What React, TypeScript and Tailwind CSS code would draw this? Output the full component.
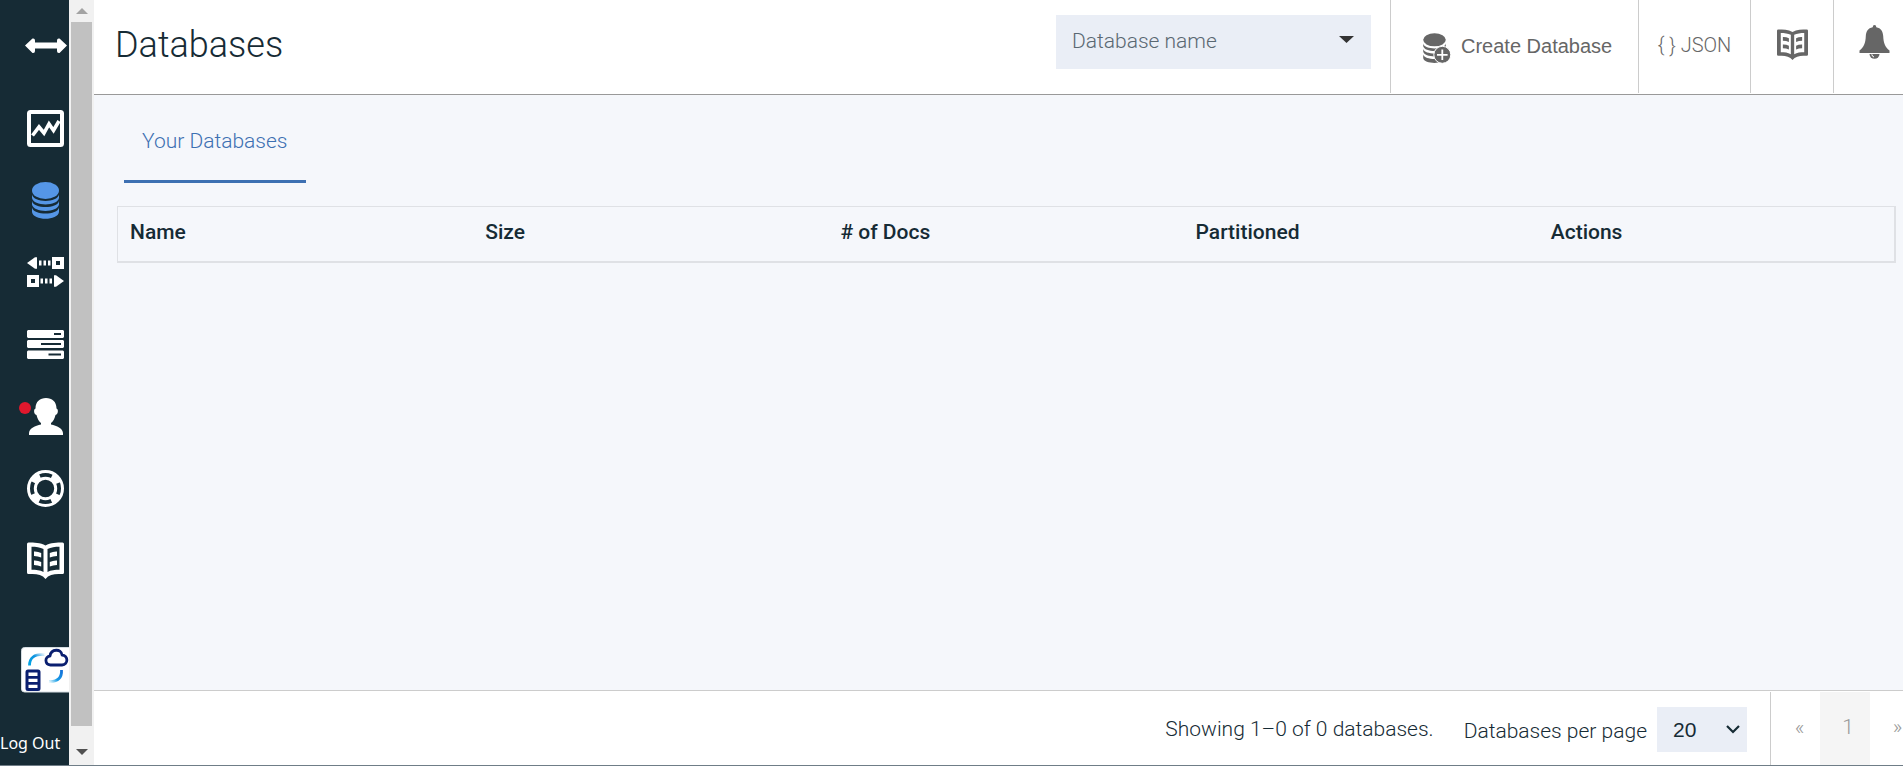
import React from 'react';

type IconProps = { className?: string };

const ArrowsIcon = ({ className }: IconProps) => (
  <svg className={className} viewBox="0 0 42 16" fill="currentColor" aria-hidden="true">
    <path d="M0 7.5 7.5 0.5Q10 0 10 2.5V4.5H32V2.5Q32 0 34.5 0.5L42 7.5 34.5 15Q32 15.5 32 13V10.5H10V13Q10 15.5 7.5 15Z" />
  </svg>
);

const ChartIcon = ({ className }: IconProps) => (
  <svg className={className} viewBox="0 0 37 37" aria-hidden="true">
    <rect x="2" y="2" width="33" height="33" rx="1.5" fill="none" stroke="currentColor" strokeWidth="4" />
    <path d="M5.5 25.5 12 17l5 6 5-9 4.500 6.500L32 11" fill="none" stroke="currentColor" strokeWidth="3.600" />
  </svg>
);

const DatabaseIcon = ({ className }: IconProps) => (
  <svg className={className} viewBox="0 0 27 37" fill="currentColor" aria-hidden="true">
    <ellipse cx="13.500" cy="8.500" rx="13.500" ry="8.500" />
    <path d="M0 12.500C1.500 21 25.500 21 27 12.500V16C25.500 24.500 1.500 24.500 0 16Z" />
    <path d="M0 19C1.500 27 25.500 27 27 19V22.500C25.500 31 1.500 31 0 22.500Z" />
    <path d="M0 25.500C1.500 33.500 25.500 33.500 27 25.500V30C26 39 1 39 0 30Z" />
  </svg>
);

const ReplicationIcon = ({ className }: IconProps) => (
  <svg className={className} viewBox="0 0 37 30" fill="currentColor" aria-hidden="true">
    <path d="M0 6 8 0.300H10V11.700H8ZM37 24 29 18.300H27V29.700H29Z" />
    <path d="M12 3.500h2.500v5H12zM16.500 3.500H19v5h-2.500zM21 3.500h2.500v5H21zM13.500 21.500H16v5h-2.500zM18 21.500h2.500v5H18zM22.500 21.500H25v5h-2.500z" />
    <path fillRule="evenodd" d="M25 0h12v12H25zM29 4v4h4V4zM0 18h12v12H0zM4 22v4h4v-4z" />
  </svg>
);

const ServersIcon = ({ className }: IconProps) => (
  <svg className={className} viewBox="0 0 37 29" fill="currentColor" aria-hidden="true">
    <path
      fillRule="evenodd"
      d="M1 0H36L37 1V7L36 8H1L0 7V1ZM27 3V5H34V3ZM1 10H36L37 11V17L36 18H1L0 17V11ZM14 13V15H34V13ZM1 20.500H36L37 21.500V28L36 29H1L0 28V21.500ZM21.500 23.500V25.500H34V23.500Z"
    />
  </svg>
);

const PersonIcon = ({ className }: IconProps) => (
  <svg className={className} viewBox="0 0 34 37" fill="currentColor" aria-hidden="true">
    <path d="M17 0C23 0 27.500 3.500 27.500 10.500 29.500 11 29.500 16 26.500 17 25.500 21 24 23.500 22 25V26.500C28 28 33.500 30 34 35V37H0V35C0.500 30 6 28 12 26.500V25C10 23.500 8.500 21 7.500 17 4.500 16 4.500 11 6.500 10.500 6.500 3.500 11 0 17 0Z" />
  </svg>
);

const SupportIcon = ({ className }: IconProps) => (
  <svg className={className} viewBox="0 0 37 37" fill="none" stroke="currentColor" aria-hidden="true">
    <circle cx="18.500" cy="18.500" r="17" strokeWidth="3" />
    <circle cx="18.500" cy="18.500" r="10.200" strokeWidth="3" />
    <circle cx="18.500" cy="18.500" r="13.500" strokeWidth="6" strokeDasharray="9.200 12" strokeDashoffset="-6" />
  </svg>
);

const BookIcon = ({ className }: IconProps) => (
  <svg className={className} viewBox="0 0 37 37" fill="currentColor" aria-hidden="true">
    <path
      fillRule="evenodd"
      d="M1.500 0.500C7 0.500 13.500 0.500 18.500 3.500 23.500 0.500 30 0.500 35.500 0.500Q37 0.500 37 2V30.500Q37 32 35.500 32C30 32 25 32 21 34.500L18.500 37 16 34.500C12 32 7 32 1.500 32Q0 32 0 30.500V2Q0 0.500 1.500 0.500ZM4.500 4.800V27.800C9 27.800 13 28.200 16.500 30V7C13 5.300 9 4.800 4.500 4.800ZM32.500 4.800C28 4.800 24 5.300 20.500 7V30C24 28.200 28 27.800 32.500 27.800Z"
    />
    <path d="M7 9.500Q11 9.300 14.200 11V15.500Q11 14 7 14ZM7 18.500Q11 18.300 14.200 20V24.500Q11 23 7 23ZM30 9.500Q26 9.300 22.800 11V15.500Q26 14 30 14ZM30 18.500Q26 18.300 22.800 20V24.500Q26 23 30 23Z" />
  </svg>
);

const DatabasePlusIcon = ({ className }: IconProps) => (
  <svg className={className} viewBox="0 0 28 31" fill="currentColor" aria-hidden="true">
    <ellipse cx="11.500" cy="6.800" rx="11.300" ry="6.500" />
    <path d="M0.200 10.500C1.500 17 21.500 17 22.800 10.500V13.200C21.500 19.500 1.500 19.500 0.200 13.200Z" />
    <path d="M0.200 16C1.500 22 21.500 22 22.800 16V18.500C21.500 25 1.500 25 0.200 18.500Z" />
    <path d="M0.200 21.500C1.500 27.500 21.500 27.500 22.800 21.500V25C22 31.500 1 31.500 0.200 25Z" />
    <circle cx="19.300" cy="21.800" r="8.500" stroke="#fff" strokeWidth="1" />
    <path d="M19.300 16.500v10.600M14 21.800h10.600" stroke="#fff" strokeWidth="1.800" />
  </svg>
);

const BellIcon = ({ className }: IconProps) => (
  <svg className={className} viewBox="0 0 31 34" fill="currentColor" aria-hidden="true">
    <path d="M15.500 0Q17.300 0 17.300 2.200C22 3 24 6.500 24.200 11 24.500 18 26 22 30.500 25.500V28H0.500V25.500C5 22 6.500 18 6.800 11 7 6.500 9 3 13.700 2.200Q13.700 0 15.500 0Z" />
    <path d="M10.500 29H20.500A5 4.800 0 0 1 10.500 29Z" />
    <path d="M12.800 29.300Q13 31.500 15 32" fill="none" stroke="#fff" strokeWidth="1" />
  </svg>
);

const ProductLogo = ({ className }: IconProps) => (
  <svg className={className} viewBox="0 0 50 46" fill="none" aria-hidden="true">
    <defs>
      <linearGradient id="arcTop" x1="0" y1="1" x2="1" y2="0">
        <stop offset="0" stopColor="#00a5e3" />
        <stop offset="0.600" stopColor="#0f93df" />
        <stop offset="1" stopColor="#0f93df" stopOpacity="0.100" />
      </linearGradient>
      <linearGradient id="arcBottom" x1="1" y1="0" x2="0" y2="1">
        <stop offset="0" stopColor="#1470d8" />
        <stop offset="0.600" stopColor="#189be6" />
        <stop offset="1" stopColor="#18a6e6" stopOpacity="0.100" />
      </linearGradient>
    </defs>
    <rect x="0.500" y="0.500" width="60" height="44.500" rx="3" fill="#fff" stroke="#d5dde2" />
    <path d="M8.500 18.500C8.500 11 13 7 23.500 7.500" stroke="url(#arcTop)" strokeWidth="2.800" />
    <path d="M40.500 23C41 30 37.500 35 28 34.500" stroke="url(#arcBottom)" strokeWidth="2.800" />
    <path
      d="M29.500 18C23.500 17.500 23.500 9.500 29 9 30 1.500 40.500 1.500 41 8 47.500 8.500 47.500 17.500 41 18Z"
      stroke="#0a1f70"
      strokeWidth="2.800"
      strokeLinejoin="round"
    />
    <rect x="6" y="24" width="12" height="18.500" rx="1" stroke="#0a1f70" strokeWidth="3" />
    <path d="M6 30.300h12M6 36.300h12" stroke="#0a1f70" strokeWidth="2.800" />
  </svg>
);

const navItems = [
  { label: 'Monitoring', icon: <ChartIcon className="size-[37px]" /> },
  { label: 'Databases', icon: <DatabaseIcon className="h-[37px] w-[27px] text-[#5596e6]" /> },
  { label: 'Replication', icon: <ReplicationIcon className="h-[30px] w-[37px]" /> },
  { label: 'Active tasks', icon: <ServersIcon className="h-[29px] w-[37px]" /> },
  { label: 'Account', icon: <PersonIcon className="h-[37px] w-[34px]" />, alert: true },
  { label: 'Support', icon: <SupportIcon className="size-[37px]" /> },
  { label: 'Documentation', icon: <BookIcon className="size-[37px]" /> },
];

function Sidebar() {
  return (
    <nav className="flex w-[69px] shrink-0 flex-col overflow-hidden bg-[#162b35] font-['Noto_Sans',sans-serif] text-white">
      <button type="button" aria-label="Toggle menu" className="flex h-[92px] items-center justify-center pl-[23px]">
        <ArrowsIcon className="h-4 w-[42px]" />
      </button>
      <ul className="flex flex-col pl-[22px]">
        {navItems.map((item) => (
          <li key={item.label}>
            <a href="#" aria-label={item.label} className="relative flex h-[72px] w-full items-center justify-center">
              {item.icon}
              {item.alert && <span className="absolute top-[22px] -left-[3px] size-3 rounded-full bg-[#e0182d]" />}
            </a>
          </li>
        ))}
      </ul>
      <div className="mt-auto flex flex-col">
        <a href="#" aria-label="Product home" className="pl-[21px]">
          <ProductLogo className="h-[46px] w-[50px] max-w-none" />
        </a>
        <a href="#" className="mt-[38px] mb-2.5 text-base leading-6 whitespace-nowrap">
          Log Out
        </a>
      </div>
    </nav>
  );
}

function ScrollRail() {
  return (
    <div aria-hidden="true" className="flex w-[25px] shrink-0 flex-col items-center bg-[#f1f1f1]">
      <div className="flex h-[22px] items-center justify-center">
        <svg className="h-1.5 w-3" viewBox="0 0 12 6" fill="#a3a3a3">
          <path d="M6 0 12 6H0Z" />
        </svg>
      </div>
      <div className="w-[21px] grow bg-[#c1c1c1]" />
      <div className="flex h-[39px] items-center justify-center pt-3">
        <svg className="h-1.5 w-3" viewBox="0 0 12 6" fill="#505050">
          <path d="M0 0H12L6 6Z" />
        </svg>
      </div>
    </div>
  );
}

function Header() {
  return (
    <header className="flex h-[95px] shrink-0 border-b border-[#999] bg-white text-[#666]">
      <h1 className="grow pt-[21px] pl-[21px] text-[36px] leading-[48px] font-light text-[#162b35]">Databases</h1>
      <div className="relative mt-[15px] mr-[19px] h-[54px] w-[315px]">
        <input
          type="text"
          aria-label="Database name"
          placeholder="Database name"
          className="size-full bg-[#eaeef6] px-4 pb-0.5 text-[21px] font-light text-[#162b35] outline-none placeholder:text-[#5a6872]"
        />
        <svg className="absolute top-[21px] right-[17px] h-[7px] w-[15px]" viewBox="0 0 15 7" fill="#333" aria-hidden="true">
          <path d="M0 0H15L7.500 7Z" />
        </svg>
      </div>
      <div className="flex h-[93px]">
        <button
          type="button"
          className="flex w-[248px] items-center gap-2.5 border-l border-[#ccc] pl-8 font-['Liberation_Sans',Arial,sans-serif] text-xl"
        >
          <DatabasePlusIcon className="mt-1 h-[31px] w-7" />
          <span className="pb-0.5">Create Database</span>
        </button>
        <button type="button" className="w-28 border-l border-[#ccc] pb-1 text-xl font-light">
          {'{ } JSON'}
        </button>
        <button type="button" aria-label="Documentation" className="flex w-[83px] justify-center border-l border-[#ccc] pt-[29px]">
          <BookIcon className="h-[31px] w-[31px]" />
        </button>
        <button type="button" aria-label="Notifications" className="flex w-[70px] border-l border-[#ccc] pt-[25px] pl-[25px]">
          <BellIcon className="h-[34px] w-[31px]" />
        </button>
      </div>
    </header>
  );
}

const columns = ['Name', 'Size', '# of Docs', 'Partitioned', 'Actions'];

function DatabaseTable() {
  return (
    <table className="w-full table-fixed border-separate border-spacing-0 border-t border-r-2 border-b-2 border-l border-[#dfe1e5] text-left text-[21px] text-[#162b35]">
      <thead>
        <tr>
          {columns.map((name) => (
            <th key={name} scope="col" className="h-[54px] px-3 pb-0.5 font-medium">
              {name}
            </th>
          ))}
        </tr>
      </thead>
    </table>
  );
}

function Footer() {
  return (
    <footer className="flex h-[75px] shrink-0 items-start justify-end border-t border-[#ccc] bg-white text-[21px] leading-7 font-light text-[#162b35]">
      <p className="mr-[30px] pt-6">Showing 1–0 of 0 databases.</p>
      <div className="flex pt-4">
        <label htmlFor="page-size" className="mr-2.5 pt-2.5">
          Databases per page
        </label>
        <div className="relative mr-[23px] h-[45px] w-[90px]">
          <select
            id="page-size"
            defaultValue="20"
            className="size-full appearance-none bg-[#eaeef6] pl-4 font-['Liberation_Sans',Arial,sans-serif] font-normal"
          >
            <option>10</option>
            <option>20</option>
            <option>50</option>
            <option>100</option>
          </select>
          <svg
            className="pointer-events-none absolute top-[18px] right-[7px] h-[9px] w-[14px]"
            viewBox="0 0 14 9"
            fill="none"
            stroke="#162b35"
            strokeWidth="2.200"
            aria-hidden="true"
          >
            <path d="M1 1 7 7 13 1" />
          </svg>
        </div>
      </div>
      <div className="mt-px flex h-[73px] w-[133px] overflow-hidden border-l border-[#ccc] text-[#999]">
        <a href="#" className="w-[49px] shrink-0 pt-[21px] pl-2 text-center">«</a>
        <a href="#" aria-current="page" className="w-[50px] shrink-0 bg-[#f5f5f5] pt-[21px] pl-1.5 text-center">1</a>
        <a href="#" className="w-[49px] shrink-0 pt-[21px] pl-1.5 text-center">»</a>
      </div>
    </footer>
  );
}

export default function App() {
  return (
    <div className="flex min-h-screen border-b border-[#6f7d87] bg-[#f5f7fb] font-['Roboto',sans-serif]">
      <Sidebar />
      <ScrollRail />
      <div className="flex min-w-0 grow flex-col">
        <Header />
        <main className="grow pr-[7px] pl-[23px]">
          <div role="tablist" className="mb-[23px] ml-[7px] flex">
            <button
              type="button"
              role="tab"
              aria-selected="true"
              className="h-[88px] border-b-3 border-[#3d70b2] px-[18px] pt-2 text-[21px] font-light text-[#3d70b2]"
            >
              Your Databases
            </button>
          </div>
          <DatabaseTable />
        </main>
        <Footer />
      </div>
    </div>
  );
}
